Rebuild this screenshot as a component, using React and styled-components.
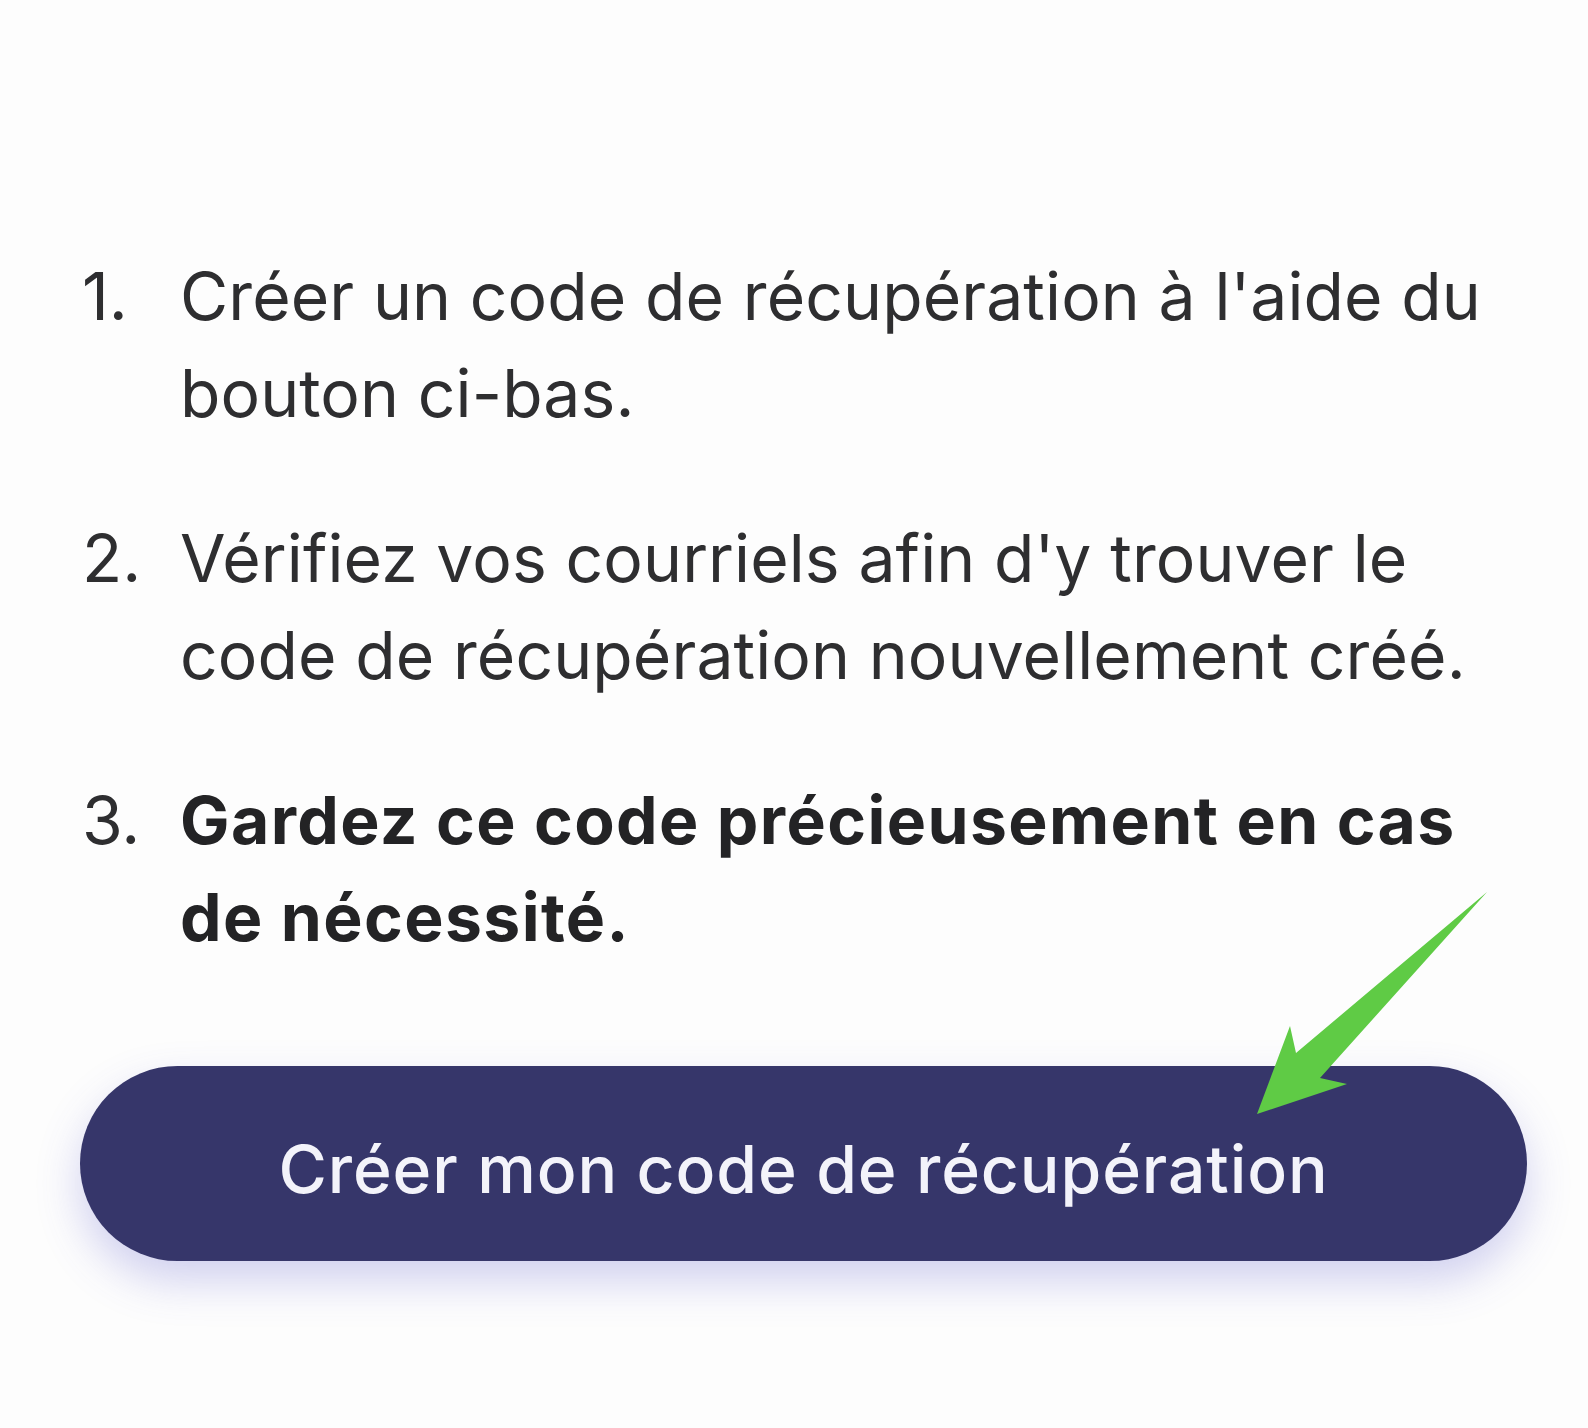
import styled, { createGlobalStyle } from 'styled-components';

const Global = createGlobalStyle`
  html, body {
    margin: 0;
    padding: 0;
    background: #fdfdfd;
  }
  body {
    font-family: Inter, "Liberation Sans", sans-serif;
    -webkit-font-smoothing: antialiased;
  }
`;

/* --- Layout --- */
const Page = styled.main`
  position: relative;
  width: 1588px;
  min-height: 1428px;
  box-sizing: border-box;
  padding: 248px 61px 0 80px;
  display: flex;
  flex-direction: column;
`;

const Steps = styled.ol`
  list-style: none;
  margin: 0;
  padding: 0;
  display: flex;
  flex-direction: column;
  gap: 68px;
`;

const Step = styled.li`
  display: grid;
  grid-template-columns: 100px 1fr;
  font-size: 66px;
  line-height: 97px;
  color: #2e2e30;
`;

const StepNum = styled.span`
  padding-left: 2px;
`;

const StepText = styled.span`
  font-weight: ${({ $strong }) => ($strong ? 700 : 400)};
  letter-spacing: ${({ $strong }) => ($strong ? '1.4px' : '0.1px')};
  color: ${({ $strong }) => ($strong ? '#232325' : '#2e2e30')};
`;

/* --- Button --- */
const PrimaryButton = styled.button`
  margin-top: 100px;
  height: 195px;
  width: 100%;
  border: none;
  border-radius: 98px;
  background: #36366a;
  color: #f3f3fa;
  font-family: Inter, "Liberation Sans", sans-serif;
  font-size: 66px;
  font-weight: 500;
  letter-spacing: 0.9px;
  display: flex;
  align-items: center;
  justify-content: center;
  padding-top: 12px;
  box-sizing: border-box;
  box-shadow: 0 20px 44px rgba(80, 80, 200, 0.26);
  cursor: pointer;
`;

/* --- Annotation arrow --- */
const Arrow = styled.svg`
  position: absolute;
  left: 0;
  top: 0;
  pointer-events: none;
`;

const steps = [
  { n: '1.', text: "Créer un code de récupération à l'aide du bouton ci-bas." },
  { n: '2.', text: "Vérifiez vos courriels afin d'y trouver le code de récupération nouvellement créé." },
  { n: '3.', text: 'Gardez ce code précieusement en cas de nécessité.', strong: true },
];

export default function App() {
  return (
    <>
      <Global />
      <Page>
        <Steps>
          {steps.map((s) => (
            <Step key={s.n}>
              <StepNum>{s.n}</StepNum>
              <StepText $strong={s.strong}>{s.text}</StepText>
            </Step>
          ))}
        </Steps>
        <PrimaryButton>Créer mon code de récupération</PrimaryButton>
        <Arrow width="1588" height="1428" viewBox="0 0 1588 1428">
          <polygon
            points="1487,892 1320,1078 1347,1084 1257,1114 1290,1026 1296,1053"
            fill="#5fcb45"
          />
        </Arrow>
      </Page>
    </>
  );
}
